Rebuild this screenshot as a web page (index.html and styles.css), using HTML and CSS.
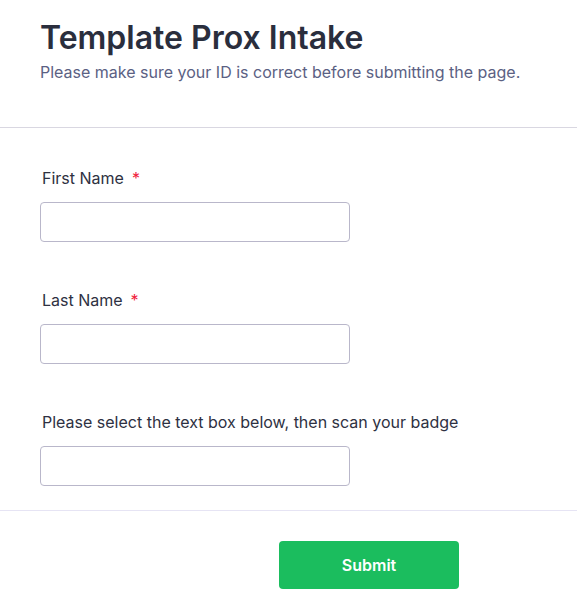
FILE: index.html
```html
<!DOCTYPE html>
<html lang="en">
<head>
<meta charset="utf-8">
<title>Template Prox Intake</title>
<link rel="stylesheet" href="styles.css">
</head>
<body>
<header class="header">
  <h1 class="title">Template Prox Intake</h1>
  <p class="subtitle">Please make sure your ID is correct before submitting the page.</p>
</header>
<form class="form">
  <div class="field">
    <label class="label">First Name<span class="req">*</span></label>
    <input class="input" type="text">
  </div>
  <div class="field">
    <label class="label">Last Name<span class="req">*</span></label>
    <input class="input" type="text">
  </div>
  <div class="field">
    <label class="label">Please select the text box below, then scan your badge</label>
    <input class="input" type="text">
  </div>
</form>
<footer class="footer">
  <button class="submit" type="button">Submit</button>
</footer>
</body>
</html>
```

FILE: styles.css
```css
* { box-sizing: border-box; }
html, body {
  margin: 0;
  padding: 0;
  background: #ffffff;
  font-family: Inter, "Noto Sans", sans-serif;
}
.header {
  padding: 19px 40px 45px 40px;
  border-bottom: 1px solid #d9d7e1;
}
.title {
  margin: 0;
  font-size: 32px;
  line-height: 38px;
  font-weight: 600;
  color: #2a2e3d;
}
.subtitle {
  margin: 5px 0 0 0;
  font-size: 16px;
  line-height: 20px;
  color: #5b6183;
}
.form {
  padding: 40px 40px 0 40px;
  display: flex;
  flex-direction: column;
  gap: 48px;
}
.field {
  display: flex;
  flex-direction: column;
  gap: 14px;
}
.label {
  padding-left: 2px;
  font-size: 16px;
  line-height: 20px;
  color: #2e3142;
}
.req {
  color: #f0203a;
  margin-left: 8px;
}
.input {
  width: 310px;
  height: 40px;
  border: 1px solid #b9b7ca;
  border-radius: 4px;
  background: #fff;
  font: inherit;
}
.footer {
  margin-top: 24px;
  border-top: 1px solid #e6e4f4;
  padding: 30px 0 0 279px;
}
.submit {
  width: 180px;
  height: 48px;
  border: none;
  border-radius: 4px;
  background: #1bbd5e;
  color: #ffffff;
  font-family: Inter, "Noto Sans", sans-serif;
  font-size: 16px;
  font-weight: 600;
}
```
